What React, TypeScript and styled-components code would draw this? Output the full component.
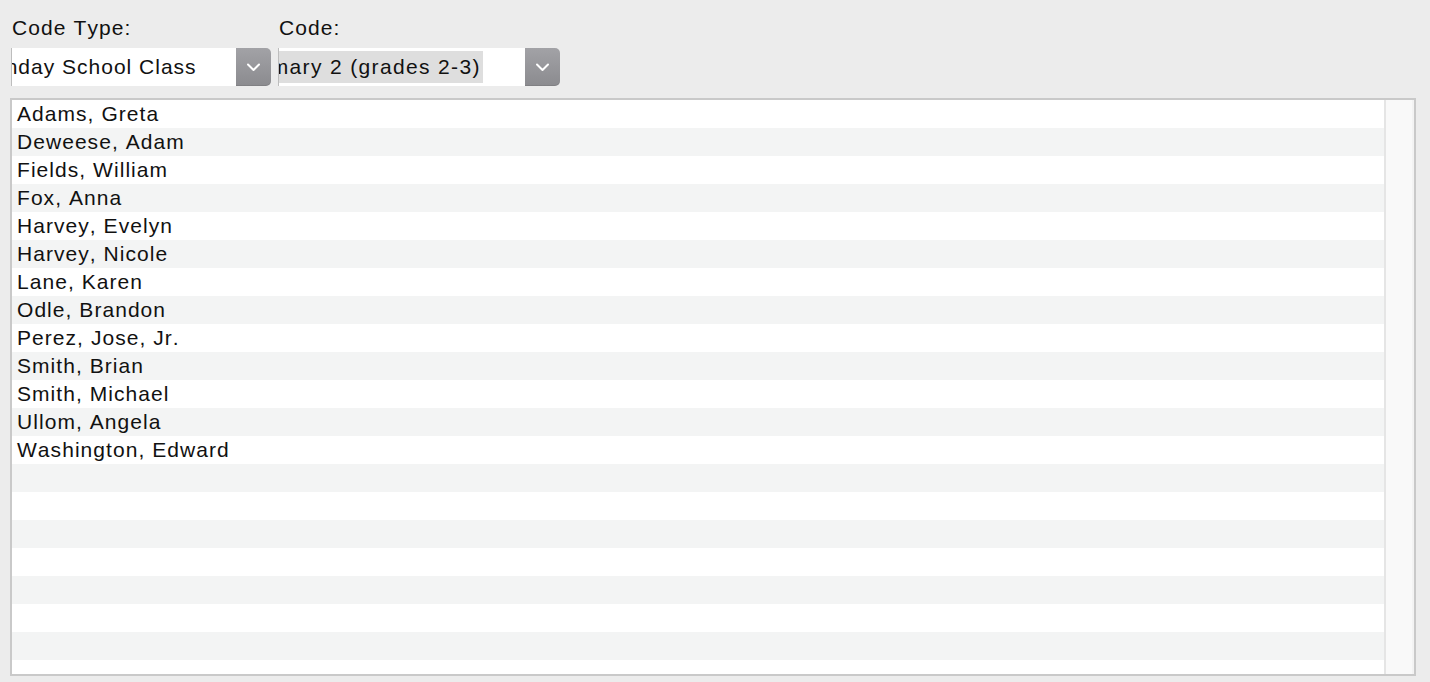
import React from "react";
import styled, { createGlobalStyle } from "styled-components";

const GlobalStyle = createGlobalStyle`
  html, body {
    margin: 0;
    padding: 0;
    background: #ececec;
  }
  body {
    font-family: "Liberation Sans", Arial, sans-serif;
    color: #111111;
    width: 1430px;
    height: 682px;
    overflow: hidden;
  }
`;

const Page = styled.div`
  display: flex;
  flex-direction: column;
  padding: 14px 0 0 10px;
`;

const Toolbar = styled.div`
  display: flex;
  gap: 6px;
`;

const Field = styled.div<{ $width: number }>`
  display: flex;
  flex-direction: column;
  gap: 6px;
  width: ${(p) => p.$width}px;
  margin-left: 1px;
`;

const Label = styled.div`
  font-size: 21px;
  line-height: 28px;
  letter-spacing: 1.1px;
  font-kerning: none;
  padding-left: 1px;
`;

const Select = styled.div`
  display: flex;
  height: 38px;
`;

const SelectValue = styled.div`
  flex: 1;
  background: #ffffff;
  border-left: 1px solid #bdbdbd;
  overflow: hidden;
  white-space: nowrap;
  font-size: 21px;
  line-height: 38px;
  padding-left: 2px;
`;

const ValueText = styled.span<{ $shift: number; $spacing: number; $selected?: boolean }>`
  display: inline-block;
  margin-left: ${(p) => -p.$shift}px;
  letter-spacing: ${(p) => p.$spacing}px;
  line-height: 32px;
  padding-right: 2px;
  background: ${(p) => (p.$selected ? "#dedede" : "transparent")};
`;

const SelectButton = styled.div`
  width: 35px;
  display: flex;
  align-items: center;
  justify-content: center;
  background: linear-gradient(#a2a2a6, #8b8b8f);
  border-radius: 0 5px 5px 0;
  box-shadow: inset 0 -1px 0 rgba(0, 0, 0, 0.08);
`;

const ListBox = styled.div`
  margin-top: 12px;
  width: 1406px;
  height: 578px;
  box-sizing: border-box;
  border: 2px solid #c9c9c9;
  display: flex;
  background: #ffffff;
`;

const Rows = styled.div`
  flex: 1;
  overflow: hidden;
`;

const Row = styled.div<{ $alt: boolean }>`
  height: 28px;
  line-height: 28px;
  padding-left: 5px;
  font-size: 21px;
  letter-spacing: 1.05px;
  font-kerning: none;
  white-space: nowrap;
  background: ${(p) => (p.$alt ? "#f3f4f4" : "#ffffff")};
`;

const ScrollTrack = styled.div`
  width: 28px;
  border-left: 2px solid #e5e5e5;
  background: #f9f9f9;
  box-shadow: inset -2px 0 0 #f3f3f3;
`;

const Chevron = () => (
  <svg width="15" height="10" viewBox="0 0 15 10" fill="none">
    <path d="M2 2.5 L7.5 8 L13 2.5" stroke="#ffffff" strokeWidth="2" strokeLinecap="round" strokeLinejoin="round" />
  </svg>
);

const names = [
  "Adams, Greta",
  "Deweese, Adam",
  "Fields, William",
  "Fox, Anna",
  "Harvey, Evelyn",
  "Harvey, Nicole",
  "Lane, Karen",
  "Odle, Brandon",
  "Perez, Jose, Jr.",
  "Smith, Brian",
  "Smith, Michael",
  "Ullom, Angela",
  "Washington, Edward",
];

const TOTAL_ROWS = 21;

export default function App() {
  const rows = Array.from({ length: TOTAL_ROWS }, (_, i) => names[i] ?? "");
  return (
    <>
      <GlobalStyle />
      <Page>
        <Toolbar>
          <Field $width={260}>
            <Label>Code Type:</Label>
            <Select>
              <SelectValue>
                <ValueText $shift={36} $spacing={1}>
                  Sunday School Class
                </ValueText>
              </SelectValue>
              <SelectButton>
                <Chevron />
              </SelectButton>
            </Select>
          </Field>
          <Field $width={282}>
            <Label>Code:</Label>
            <Select>
              <SelectValue>
                <ValueText $shift={40} $spacing={1.35} $selected>
                  Primary 2 (grades 2-3)
                </ValueText>
              </SelectValue>
              <SelectButton>
                <Chevron />
              </SelectButton>
            </Select>
          </Field>
        </Toolbar>
        <ListBox>
          <Rows>
            {rows.map((n, i) => (
              <Row key={i} $alt={i % 2 === 1}>
                {n}
              </Row>
            ))}
          </Rows>
          <ScrollTrack />
        </ListBox>
      </Page>
    </>
  );
}
